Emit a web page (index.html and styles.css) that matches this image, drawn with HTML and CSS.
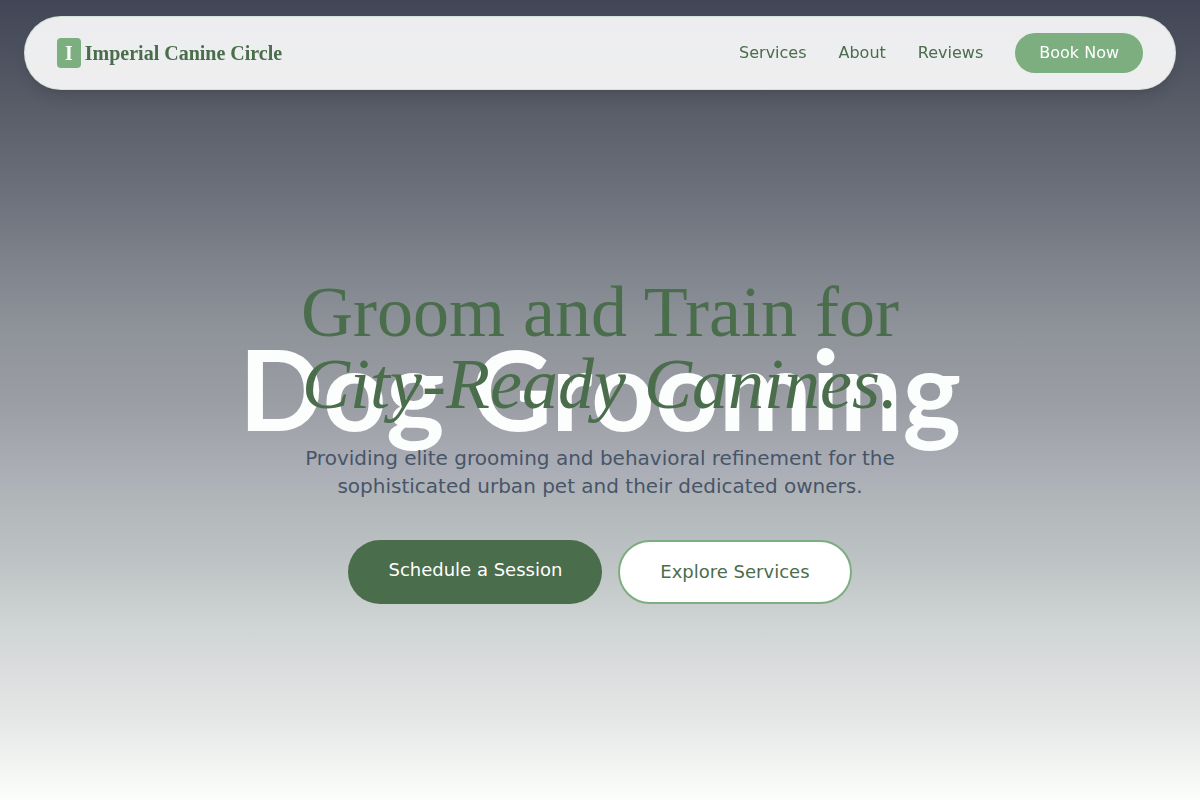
FILE: index.html
```html
<!DOCTYPE html>
<html lang="en">
<head>
    <meta charset="UTF-8">
    <meta name="viewport" content="width=device-width, initial-scale=1.0">
    <title>Imperial Canine Circle</title>
    <link rel="stylesheet" href="styles.css">
</head>
<body>

    <header class="navbar">
        <a href="#" class="brand"><span class="brand-mark">I</span>Imperial Canine Circle</a>
        <nav class="nav-links">
            <a href="#services">Services</a>
            <a href="#about">About</a>
            <a href="#reviews">Reviews</a>
            <a href="#book" class="nav-book">Book Now</a>
        </nav>
    </header>

    <main class="hero">
        <div class="hero-word">Dog Grooming</div>
        <div class="hero-content">
            <h1>Groom and Train for <br><em>City-Ready Canines.</em></h1>
            <p>Providing elite grooming and behavioral refinement for the sophisticated urban pet and their dedicated owners.</p>
            <div class="hero-actions">
                <a href="#book" class="btn btn-primary">Schedule a Session</a>
                <a href="#services" class="btn btn-outline">Explore Services</a>
            </div>
        </div>
    </main>

</body>
</html>
```
FILE: styles.css
```css
* {
    box-sizing: border-box;
}

body {
    margin: 0;
    font-family: "DejaVu Sans", sans-serif;
    color: #4a6d4b;
}

a {
    color: inherit;
    text-decoration: none;
}

/* Floating navigation */
.navbar {
    position: fixed;
    top: 16px;
    left: 24px;
    right: 24px;
    z-index: 10;
    display: flex;
    justify-content: space-between;
    align-items: center;
    padding: 16px 32px;
    background: rgba(255, 255, 255, 0.9);
    border: 1px solid rgba(124, 174, 127, 0.2);
    border-radius: 40px;
    box-shadow: 0 10px 15px -3px rgba(0, 0, 0, 0.1), 0 4px 6px -4px rgba(0, 0, 0, 0.1);
}

.brand {
    display: flex;
    align-items: center;
    gap: 4px;
    font-family: "Liberation Serif", serif;
    font-size: 20px;
    font-weight: 700;
}

.brand-mark {
    padding: 0 8px;
    line-height: 30px;
    color: white;
    background: #7cae7f;
    border-radius: 4px;
}

.nav-links {
    display: flex;
    align-items: center;
    gap: 32px;
    font-size: 16px;
    line-height: 24px;
}

.nav-book {
    padding: 8px 24px;
    color: white;
    background: #7cae7f;
    border-radius: 20px;
}

/* Hero */
.hero {
    display: grid;
    place-items: center;
    min-height: 100vh;
    padding: 80px 24px 0;
    text-align: center;
    background: linear-gradient(to bottom, #414656 0%, #5a5e69 14%, #6e727c 25%, #7f838c 33%, #8e9299 41%, #9b9da4 50%, #abaeb6 59%, #b0b5b8 62%, #bdc2c4 70%, #cfd4d4 78%, #dadbdd 83%, #e5e7e6 90%, #fcfefc 100%);
}

.hero-word,
.hero-content {
    grid-area: 1 / 1;
}

.hero-word {
    margin-bottom: 104px;
    font-family: Lato, sans-serif;
    font-size: 111px;
    font-weight: 700;
    line-height: 112px;
    color: #fcfdfd;
    white-space: nowrap;
}

.hero-content {
    z-index: 1;
}

.hero h1 {
    margin: 0 0 24px;
    font-family: "Liberation Serif", serif;
    font-size: 72px;
    font-weight: 400;
    line-height: 72px;
}

.hero p {
    max-width: 672px;
    margin: 0 auto 40px;
    font-size: 20px;
    line-height: 28px;
    color: #475569;
}

.hero-actions {
    display: flex;
    justify-content: center;
    gap: 16px;
}

.btn {
    padding: 16px 40px;
    font-size: 18px;
    line-height: 28px;
    border-radius: 32px;
}

.btn-primary {
    color: white;
    background: #4a6d4b;
}

.btn-outline {
    background: white;
    border: 2px solid #7cae7f;
}
```
